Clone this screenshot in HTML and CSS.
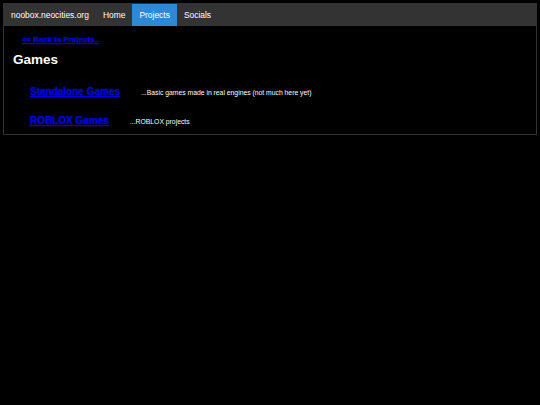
FILE: index.html
```html
<!DOCTYPE html>
<html>
<head>
<meta charset="utf-8">
<link rel="stylesheet" href="styles.css">
</head>
<body>
<div class="frame">
  <nav class="nav">
    <a class="nav-item" href="#">noobox.neocities.org</a>
    <a class="nav-item" href="#">Home</a>
    <a class="nav-item active" href="#">Projects</a>
    <a class="nav-item" href="#">Socials</a>
  </nav>
  <div class="content">
    <a class="back" href="#">&lt;&lt; Back to Projects..</a>
    <h1 class="title">Games</h1>
    <div class="row row-first">
      <a class="game-link" href="#">Standalone Games</a>
      <span class="desc">...Basic games made in real engines (not much here yet)</span>
    </div>
    <div class="row">
      <a class="game-link" href="#">ROBLOX Games</a>
      <span class="desc">...ROBLOX projects</span>
    </div>
  </div>
</div>
</body>
</html>
```
FILE: styles.css
```css
html, body {
  background: #000;
}
body {
  margin: 3px;
  font-family: "Liberation Sans", Arial, sans-serif;
  color: #fff;
}
.frame {
  width: 532px;
  border: 1px solid #333;
}
.nav {
  display: flex;
  height: 22px;
  background: #333;
}
.nav-item {
  display: flex;
  align-items: center;
  padding: 0 7px;
  font-size: 8.45px;
  color: #fff;
  text-decoration: none;
}
.nav-item.active {
  background: #2f88d4;
}
.content {
  padding: 8.5px 9px 7px 9px;
}
.back {
  display: block;
  margin-left: 9px;
  font-size: 7.8px;
  line-height: 9px;
  font-weight: bold;
  color: #0000e0;
  text-shadow: 0 0 2px #0000a0;
}
.title {
  margin: 8px 0 0 0;
  font-size: 13.5px;
  line-height: 16px;
  font-weight: bold;
  color: #fff;
}
.row {
  display: flex;
  align-items: center;
  margin-top: 17px;
  padding-left: 17px;
  height: 12px;
}
.row-first {
  margin-top: 18.5px;
}
.game-link {
  font-size: 10px;
  line-height: 12px;
  font-weight: bold;
  color: #0000e0;
  text-shadow: 0 0 2px #0000a0;
}
.desc {
  margin-left: 21px;
  font-size: 6.8px;
  color: #fff;
}
```
